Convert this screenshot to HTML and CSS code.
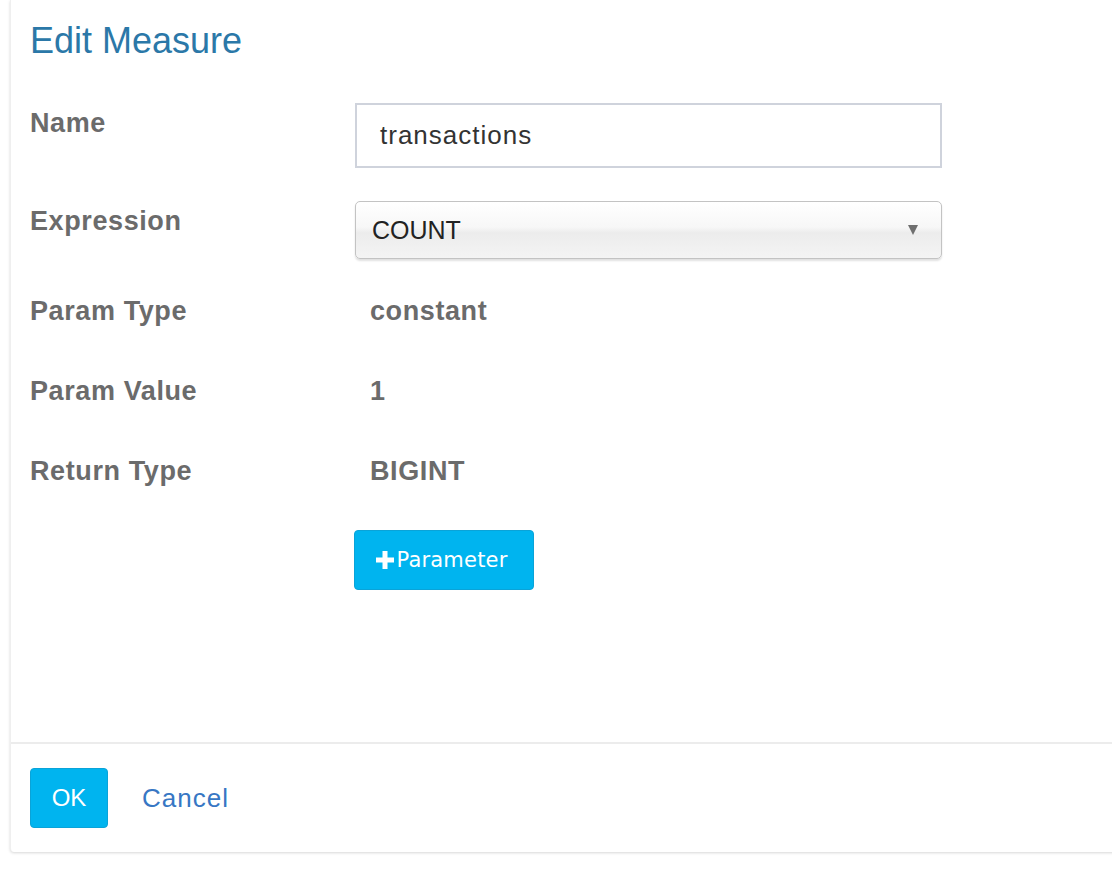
FILE: index.html
```html
<!DOCTYPE html>
<html>
<head>
<meta charset="utf-8">
<title>Edit Measure</title>
<link rel="stylesheet" href="styles.css">
</head>
<body>
<div class="panel">
  <div class="panel-head">
    <h3 class="title">Edit Measure</h3>
  </div>
  <div class="panel-body">
    <div class="row row-input">
      <div class="label">Name</div>
      <div class="field">
        <div class="text-input">transactions</div>
      </div>
    </div>
    <div class="row row-select">
      <div class="label">Expression</div>
      <div class="field">
        <div class="select">
          <span class="select-value">COUNT</span>
          <svg class="caret" width="10" height="10" viewBox="0 0 10 10"><path d="M0 0 H10 L5 10 Z" fill="#6f6f6f"/></svg>
        </div>
      </div>
    </div>
    <div class="row row-static">
      <div class="label">Param Type</div>
      <div class="value">constant</div>
    </div>
    <div class="row row-static">
      <div class="label">Param Value</div>
      <div class="value">1</div>
    </div>
    <div class="row row-static row-last">
      <div class="label">Return Type</div>
      <div class="value">BIGINT</div>
    </div>
    <div class="row row-button">
      <div class="label"></div>
      <div class="field">
        <button class="btn btn-param"><svg class="plus" width="18" height="18" viewBox="0 0 18 18"><path d="M6.5 0 H11.5 V6.5 H18 V11.5 H11.5 V18 H6.5 V11.5 H0 V6.5 H6.5 Z" fill="#fff"/></svg>Parameter</button>
      </div>
    </div>
  </div>
  <div class="panel-foot">
    <button class="btn btn-ok">OK</button>
    <a class="cancel" href="#">Cancel</a>
  </div>
</div>
</body>
</html>
```
FILE: styles.css
```css
html {
  margin: 0;
  padding: 0;
  background: #ffffff;
  overflow: hidden;
}
body {
  margin: 0;
  padding: 0 0 20px 0;
  font-family: "Liberation Sans", Arial, sans-serif;
  color: #333;
}
.panel {
  margin-left: 10px;
  width: 1130px;
  background: #fff;
  border-left: 1px solid #efefef;
  border-radius: 0 0 0 4px;
  box-shadow: 0 1px 3px rgba(0, 0, 0, 0.16);
}
.panel-head {
  padding: 21px 0 0 19px;
}
.title {
  margin: 0;
  font-size: 36px;
  line-height: 40px;
  font-weight: normal;
  color: #2b78a8;
}
.panel-body {
  padding: 42px 0 0 19px;
  height: 683px;
  box-sizing: border-box;
  border-bottom: 2px solid #ececec;
}
.row {
  display: flex;
  align-items: flex-start;
}
.label {
  width: 325px;
  flex: none;
  font-size: 27px;
  letter-spacing: 0.6px;
  line-height: 36px;
  font-weight: bold;
  color: #6b6b6b;
  padding-top: 2px;
}
.row-static .label { padding-top: 0; }
.value {
  padding-left: 15px;
  font-size: 27px;
  letter-spacing: 0.6px;
  line-height: 36px;
  font-weight: bold;
  color: #6b6b6b;
}
.row-input { margin-bottom: 33px; }
.row-select { margin-bottom: 34px; }
.row-static { margin-bottom: 44px; }
.row-static.row-last { margin-bottom: 41px; }
.text-input {
  width: 587px;
  height: 65px;
  box-sizing: border-box;
  border: 2px solid #cfd3dc;
  padding: 0 0 0 23px;
  font-size: 26px;
  letter-spacing: 1px;
  line-height: 61px;
  color: #333;
}
.select {
  width: 587px;
  height: 58px;
  box-sizing: border-box;
  border: 1px solid #c3c3c3;
  border-radius: 5px;
  background: linear-gradient(#ffffff 0%, #f7f7f7 45%, #ececec 55%, #f4f4f4 100%);
  box-shadow: 0 2px 2px rgba(0, 0, 0, 0.12);
  display: flex;
  align-items: center;
  justify-content: space-between;
  padding: 0 23px 0 16px;
}
.select-value {
  font-size: 25px;
  color: #222;
}
.caret { display: block; margin-top: 0; }
.btn {
  border: 1px solid #0aa3d8;
  background: #00b4ef;
  color: #fff;
  border-radius: 4px;
  cursor: pointer;
  margin: 0;
}
.btn-param {
  width: 180px;
  height: 60px;
  margin-left: -1px;
  font-family: "DejaVu Sans", Verdana, sans-serif;
  font-size: 21px;
  letter-spacing: 0.2px;
  display: flex;
  align-items: center;
  justify-content: center;
  padding: 0 4px 0 0;
}
.plus { display: block; margin-right: 2px; }
.panel-foot {
  padding: 24px 0 24px 19px;
  display: flex;
  align-items: center;
}
.btn-ok {
  width: 78px;
  height: 60px;
  font-family: "Liberation Sans", Arial, sans-serif;
  font-size: 24px;
}
.cancel {
  margin-left: 34px;
  font-size: 26px;
  letter-spacing: 1px;
  color: #3777c4;
  text-decoration: none;
}
```
